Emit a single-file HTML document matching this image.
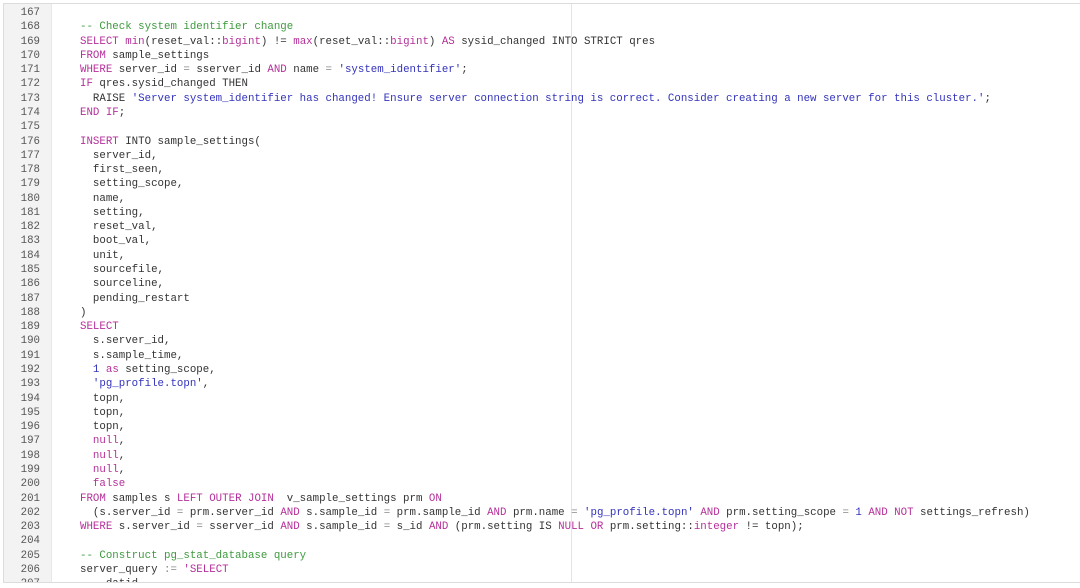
<!DOCTYPE html><html><head><style>
body{margin:0;background:#fff;width:1080px;height:588px;overflow:hidden;position:relative;font-family:"Liberation Mono",monospace;font-size:10.77px}
#f{position:absolute;left:3px;top:3px;width:1080px;height:578px;border:1px solid #dcdcdc;border-right:none;overflow:hidden}
#g{position:absolute;left:0;top:0;width:47px;height:100%;background:#f3f3f3;border-right:1px solid #e8e8e8}
#m{position:absolute;left:567px;top:0;width:1px;height:100%;background:#e4e4e4}
.l{position:absolute;left:0;height:14.28px;line-height:14.28px;white-space:pre;color:#333}
.n{width:36px;text-align:right;color:#555}
.c{left:76px}
.k{color:#b5309a}.s{color:#3333bb}.cm{color:#3f9a3f}.o{color:#888}
</style></head><body><div id="f"><div id="g"></div><div id="m"></div>
<div id="L"></div></div>
<script>
var lines=[
"",
"<span class=cm>-- Check system identifier change</span>",
"<span class=k>SELECT</span> <span class=k>min</span>(reset_val::<span class=k>bigint</span>) != <span class=k>max</span>(reset_val::<span class=k>bigint</span>) <span class=k>AS</span> sysid_changed INTO STRICT qres",
"<span class=k>FROM</span> sample_settings",
"<span class=k>WHERE</span> server_id <span class=o>=</span> sserver_id <span class=k>AND</span> name <span class=o>=</span> <span class=s>'system_identifier'</span>;",
"<span class=k>IF</span> qres.sysid_changed THEN",
"  RAISE <span class=s>'Server system_identifier has changed! Ensure server connection string is correct. Consider creating a new server for this cluster.'</span>;",
"<span class=k>END IF</span>;",
"",
"<span class=k>INSERT</span> INTO sample_settings(",
"  server_id,","  first_seen,","  setting_scope,","  name,","  setting,","  reset_val,","  boot_val,","  unit,","  sourcefile,","  sourceline,","  pending_restart",
")",
"<span class=k>SELECT</span>",
"  s.server_id,","  s.sample_time,",
"  <span class=s>1</span> <span class=k>as</span> setting_scope,",
"  <span class=s>'pg_profile.topn'</span>,",
"  topn,","  topn,","  topn,",
"  <span class=k>null</span>,","  <span class=k>null</span>,","  <span class=k>null</span>,","  <span class=k>false</span>",
"<span class=k>FROM</span> samples s <span class=k>LEFT OUTER JOIN</span>  v_sample_settings prm <span class=k>ON</span>",
"  (s.server_id <span class=o>=</span> prm.server_id <span class=k>AND</span> s.sample_id <span class=o>=</span> prm.sample_id <span class=k>AND</span> prm.name <span class=o>=</span> <span class=s>'pg_profile.topn'</span> <span class=k>AND</span> prm.setting_scope <span class=o>=</span> <span class=s>1</span> <span class=k>AND NOT</span> settings_refresh)",
"<span class=k>WHERE</span> s.server_id <span class=o>=</span> sserver_id <span class=k>AND</span> s.sample_id <span class=o>=</span> s_id <span class=k>AND</span> (prm.setting IS <span class=k>NULL</span> <span class=k>OR</span> prm.setting::<span class=k>integer</span> != topn);",
"",
"<span class=cm>-- Construct pg_stat_database query</span>",
"server_query <span class=o>:=</span> <span class=k>'SELECT</span>",
"    datid,"
];
var h="";for(var i=0;i<lines.length;i++){var t=(2+i*14.28).toFixed(2);
h+='<div class="l n" style="top:'+t+'px">'+(167+i)+'</div><div class="l c" style="top:'+t+'px">'+lines[i]+'</div>';}
document.getElementById("L").innerHTML=h;
</script></body></html>
